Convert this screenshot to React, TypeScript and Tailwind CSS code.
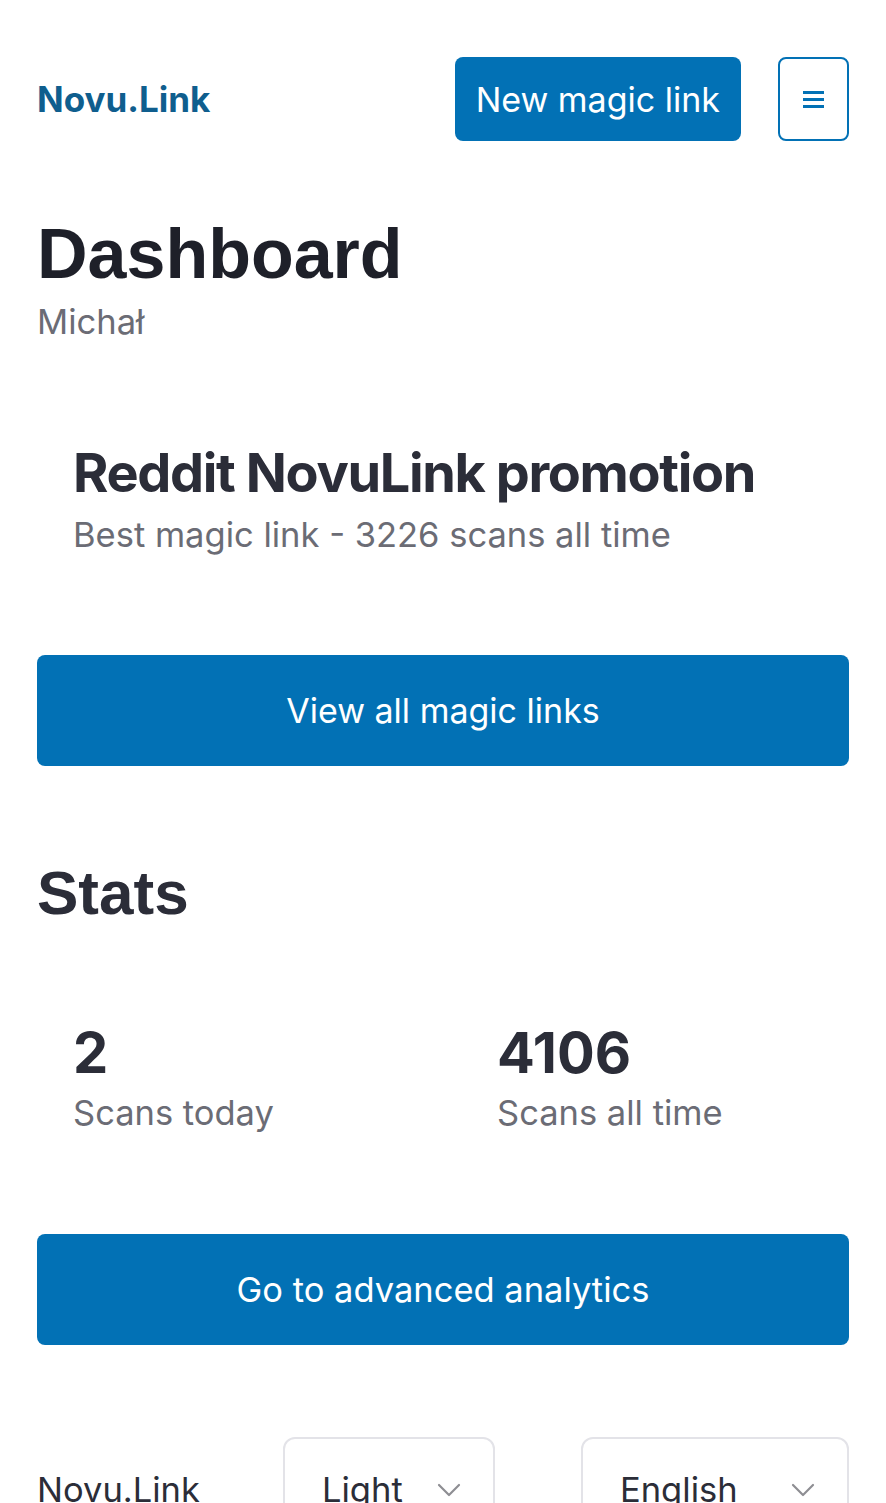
import React from 'react';

const ChevronDown: React.FC = () => (
    <svg width="24" height="14" viewBox="0 0 24 14" fill="none" stroke="#8e8e93" strokeWidth="2.2" strokeLinecap="round" strokeLinejoin="round">
        <path d="M2 2l10 10 10-10" />
    </svg>
);

const Stat: React.FC<{ value: string; label: string }> = ({ value, label }) => (
    <div className="px-9 py-4">
        <div className="text-[56px] leading-[64px] font-bold text-[#2b2d38]">{value}</div>
        <div className="mt-[6px] text-[34.5px] leading-[44px] text-[#6b6c75]">{label}</div>
    </div>
);

const App: React.FC = () => {
    return (
        <div className="min-h-[1503px] bg-white px-[37px] font-['Inter',sans-serif] overflow-hidden">
            <header className="flex items-center justify-between pt-[57px]">
                <a className="text-[35px] font-bold text-[#0f5e8e]">Novu.Link</a>
                <div className="flex items-center gap-[37px]">
                    <button className="h-[84px] px-[21px] rounded-lg bg-[#0271b5] text-white text-[34px]">
                        New magic link
                    </button>
                    <button className="h-[84px] w-[71px] rounded-lg border-2 border-[#0271b5] flex items-center justify-center">
                        <span className="flex flex-col gap-[4px]">
                            <span className="block w-[21px] h-[3px] bg-[#0271b5]" />
                            <span className="block w-[21px] h-[3px] bg-[#0271b5]" />
                            <span className="block w-[21px] h-[3px] bg-[#0271b5]" />
                        </span>
                    </button>
                </div>
            </header>

            <section className="mt-[73px]">
                <h1 className="text-[70px] leading-[80px] font-bold text-[#1e2029] font-['Liberation_Sans',sans-serif]">Dashboard</h1>
                <p className="mt-[8px] text-[34.5px] leading-[40px] text-[#6b6c75]">Michał</p>
            </section>

            <div className="mt-[99px] px-9">
                <h2 className="text-[54px] leading-[64px] font-bold text-[#2b2d38] tracking-tight">Reddit NovuLink promotion</h2>
                <p className="mt-[8px] text-[34.5px] leading-[44px] text-[#6b6c75]">Best magic link - 3226 scans all time</p>
            </div>

            <button className="mt-[98px] w-full h-[111px] rounded-lg bg-[#0271b5] text-white text-[34px]">
                View all magic links
            </button>

            <h2 className="mt-[91px] text-[62px] leading-[72px] font-bold text-[#2b2d38] font-['Liberation_Sans',sans-serif]">Stats</h2>

            <div className="mt-[76px] grid grid-cols-2 gap-9">
                <Stat value="2" label="Scans today" />
                <Stat value="4106" label="Scans all time" />
            </div>

            <button className="mt-[83px] w-full h-[111px] rounded-lg bg-[#0271b5] text-white text-[34.5px]">
                Go to advanced analytics
            </button>

            <footer className="mt-[92px] flex items-center justify-between">
                <span className="text-[34.5px] leading-[44px] text-[#2b2d38]">Novu.Link</span>
                <div className="flex items-center gap-[86px]">
                    <div className="w-[212px] h-[106px] rounded-xl border-2 border-[#e3e3e8] flex items-center justify-between pl-[37px] pr-[32px]">
                        <span className="text-[34.5px] leading-[44px] text-[#2b2d38]">Light</span>
                        <ChevronDown />
                    </div>
                    <div className="w-[268px] h-[106px] rounded-xl border-2 border-[#e3e3e8] flex items-center justify-between pl-[37px] pr-[32px]">
                        <span className="text-[34.5px] leading-[44px] text-[#2b2d38]">English</span>
                        <ChevronDown />
                    </div>
                </div>
            </footer>
        </div>
    );
};

export default App;
